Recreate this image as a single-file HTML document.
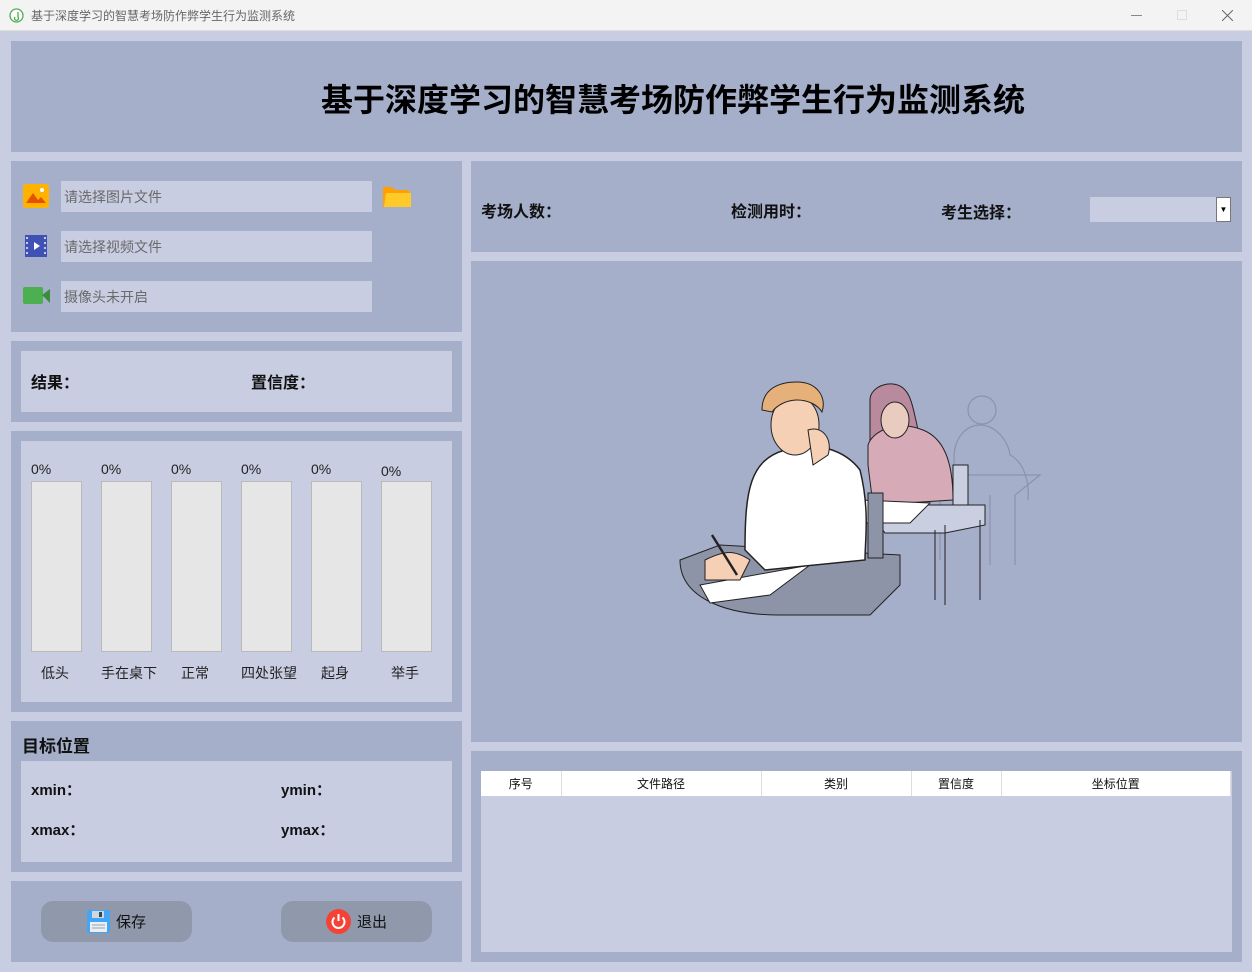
<!DOCTYPE html>
<html><head><meta charset="utf-8"><style>
*{margin:0;padding:0;box-sizing:border-box}
body{width:1252px;height:972px;background:#c8cde2;font-family:"Liberation Sans","Noto Sans CJK SC",sans-serif;position:relative;overflow:hidden}
.a{position:absolute}
.p{position:absolute;background:#a5afca}
.l{position:absolute;background:#c8cde2}
.b{font-weight:bold;font-size:16px;color:#111}
.bar{position:absolute;top:481px;width:51px;height:171px;background:#e6e6e6;border:1px solid #b9b9b9}
.pc{position:absolute;top:461px;font-size:14px;color:#222}
.bl{position:absolute;top:663px;font-size:14px;color:#222}
.inp{position:absolute;left:61px;width:311px;height:31px;background:#c8cde2;color:#6a6a6a;font-size:14px;padding:8px 3px;line-height:17px}
.btn{position:absolute;top:901px;width:151px;height:41px;border-radius:12px;background:#8f99ab;font-size:15px;color:#111;display:flex;align-items:center;justify-content:center;gap:6px}
th{font-weight:normal;font-size:12px;color:#111;height:25px;background:#fff;border-right:1px solid #ddd}
</style></head><body>
<div class="a" style="left:0;top:0;width:1252px;height:31px;background:#f3f3f3;border-bottom:1px solid #ddd"></div>
<svg class="a" style="left:9px;top:8px" width="15" height="15"><circle cx="7.5" cy="7.5" r="6.5" fill="#fff" stroke="#4caf50" stroke-width="1.3"/><path d="M6 9a2 2 0 1 0 3 0V4" stroke="#4caf50" fill="none" stroke-width="1.3"/></svg>
<div class="a" style="left:31px;top:7px;font-size:12px;color:#666">基于深度学习的智慧考场防作弊学生行为监测系统</div>
<div class="a" style="left:1131px;top:15px;width:11px;height:1px;background:#888"></div>
<div class="a" style="left:1177px;top:10px;width:10px;height:10px;border:1px solid #ddd"></div>
<svg class="a" style="left:1222px;top:10px" width="11" height="11"><path d="M0 0L11 11M11 0L0 11" stroke="#666" stroke-width="1"/></svg>

<div class="p" style="left:11px;top:41px;width:1231px;height:111px"></div>
<div class="a" style="left:321px;top:75px;font-size:32px;font-weight:bold;color:#000;white-space:nowrap">基于深度学习的智慧考场防作弊学生行为监测系统</div>

<div class="p" style="left:11px;top:161px;width:451px;height:171px"></div>
<svg class="a" style="left:23px;top:184px" width="26" height="24"><rect width="26" height="24" rx="3" fill="#ffb300"/><path d="M3 19l7-10 5 7 3-3 5 6z" fill="#e65100"/><circle cx="19" cy="6" r="2" fill="#fff"/></svg>
<div class="inp" style="top:181px">请选择图片文件</div>
<svg class="a" style="left:383px;top:185px" width="28" height="22"><path d="M0 2h9l3 3h14v17H0z" fill="#ffa000"/><path d="M3 8h25v14H1z" fill="#ffca28"/></svg>
<svg class="a" style="left:25px;top:235px" width="22" height="22"><rect width="22" height="22" fill="#3f51b5"/><g fill="#c5cae9"><rect x="1" y="2" width="2" height="2"/><rect x="1" y="7" width="2" height="2"/><rect x="1" y="12" width="2" height="2"/><rect x="1" y="17" width="2" height="2"/><rect x="19" y="2" width="2" height="2"/><rect x="19" y="7" width="2" height="2"/><rect x="19" y="12" width="2" height="2"/><rect x="19" y="17" width="2" height="2"/></g><path d="M9 7l6 4-6 4z" fill="#fff"/></svg>
<div class="inp" style="top:231px">请选择视频文件</div>
<svg class="a" style="left:23px;top:287px" width="27" height="17"><rect width="20" height="17" rx="2" fill="#4caf50"/><path d="M19 8l8-6v14z" fill="#388e3c"/></svg>
<div class="inp" style="top:281px">摄像头未开启</div>

<div class="p" style="left:11px;top:341px;width:451px;height:81px"></div>
<div class="l" style="left:21px;top:351px;width:431px;height:61px"></div>
<div class="a b" style="left:31px;top:369px">结果：</div>
<div class="a b" style="left:251px;top:369px">置信度：</div>

<div class="p" style="left:11px;top:431px;width:451px;height:281px"></div>
<div class="l" style="left:21px;top:441px;width:431px;height:261px"></div>
<div class="pc" style="left:31px">0%</div><div class="pc" style="left:101px">0%</div><div class="pc" style="left:171px">0%</div><div class="pc" style="left:241px">0%</div><div class="pc" style="left:311px">0%</div><div class="pc" style="left:381px;top:463px">0%</div>
<div class="bar" style="left:31px"></div><div class="bar" style="left:101px"></div><div class="bar" style="left:171px"></div><div class="bar" style="left:241px"></div><div class="bar" style="left:311px"></div><div class="bar" style="left:381px"></div>
<div class="bl" style="left:41px">低头</div><div class="bl" style="left:101px">手在桌下</div><div class="bl" style="left:181px">正常</div><div class="bl" style="left:241px">四处张望</div><div class="bl" style="left:321px">起身</div><div class="bl" style="left:391px">举手</div>

<div class="p" style="left:11px;top:721px;width:451px;height:151px"></div>
<div class="a b" style="left:22px;top:732px;font-size:17px">目标位置</div>
<div class="l" style="left:21px;top:761px;width:431px;height:101px"></div>
<div class="a b" style="left:31px;top:779px;font-size:15px">xmin：</div>
<div class="a b" style="left:281px;top:779px;font-size:15px">ymin：</div>
<div class="a b" style="left:31px;top:819px;font-size:15px">xmax：</div>
<div class="a b" style="left:281px;top:819px;font-size:15px">ymax：</div>

<div class="p" style="left:11px;top:881px;width:451px;height:81px"></div>
<div class="btn" style="left:41px"><svg width="23" height="23"><rect width="23" height="23" rx="2" fill="#42a5f5"/><rect x="5" y="1" width="12" height="7" fill="#cfd8dc"/><rect x="12" y="2" width="3" height="5" fill="#37474f"/><rect x="3" y="12" width="17" height="10" fill="#eceff1"/><path d="M5 15h13M5 18h13" stroke="#90a4ae"/></svg>保存</div>
<div class="btn" style="left:281px"><svg width="25" height="25"><circle cx="12.5" cy="12.5" r="12.5" fill="#f44336"/><path d="M8.5 8.5a6 6 0 1 0 8 0" stroke="#fff" stroke-width="2" fill="none"/><path d="M12.5 5v7" stroke="#fff" stroke-width="2"/></svg>退出</div>

<div class="p" style="left:471px;top:161px;width:771px;height:91px"></div>
<div class="a b" style="left:481px;top:198px">考场人数：</div>
<div class="a b" style="left:731px;top:198px">检测用时：</div>
<div class="a b" style="left:941px;top:199px">考生选择：</div>
<div class="l" style="left:1090px;top:197px;width:141px;height:25px"></div>
<div class="a" style="left:1216px;top:197px;width:15px;height:25px;background:#fff;border:1px solid #777;font-size:8px;text-align:center;line-height:23px">▼</div>

<div class="p" style="left:471px;top:261px;width:771px;height:481px"></div>
<svg class="a" style="left:670px;top:380px" width="380" height="240" viewBox="670 380 380 240">
<g stroke="#8a93aa" fill="none" stroke-width="1.2"><path d="M955 470c-5-30 10-45 25-45s28 15 30 30c10 5 20 20 18 45"/><circle cx="982" cy="410" r="14"/><path d="M965 475h75l-25 20v70M990 495v70M940 500v60"/></g>
<path d="M865 505h120v20l-40 8h-60z" fill="#c9cfe0" stroke="#222"/><path d="M945 525v80M980 520v80M935 530v70" stroke="#222"/>
<rect x="953" y="465" width="15" height="40" fill="#c9cfe0" stroke="#222"/>
<path d="M870 400c0-15 25-22 35-10 10 10 10 40 20 60l-55 5z" fill="#b98a9e" stroke="#222"/>
<path d="M868 445c5-15 30-25 55-15 20 8 30 30 30 70l-80 5-5-40z" fill="#d7aab8" stroke="#222"/>
<ellipse cx="895" cy="420" rx="14" ry="18" fill="#e9cbbf" stroke="#222"/>
<path d="M860 500l70 3-20 20h-60z" fill="#fff" stroke="#222"/>
<path d="M680 560l40-15 180 10v30l-30 30H780c-60 0-100-20-100-55z" fill="#8d94a8" stroke="#222"/>
<path d="M700 585l110-20-40 30-60 8z" fill="#fff" stroke="#222"/>
<rect x="868" y="493" width="15" height="65" fill="#8d94a8" stroke="#222"/>
<path d="M745 550c0-60 5-90 40-100 30-10 60 0 75 20 10 40 5 70 5 90l-100 10z" fill="#fff" stroke="#222" stroke-width="1.5"/>
<path d="M705 560c20-10 30-10 45 0l-10 20h-35z" fill="#f5d0b5" stroke="#222"/>
<path d="M712 535l25 40" stroke="#222" stroke-width="2.5"/>
<ellipse cx="795" cy="425" rx="24" ry="30" fill="#f5d0b5" stroke="#222"/>
<path d="M762 410c0-20 15-28 35-28s30 15 25 30c-5-8-15-12-25-12-10 0-20 5-25 12z" fill="#e6b07a" stroke="#222"/>
<path d="M808 430c15-5 25 10 20 25l-15 10z" fill="#f5d0b5" stroke="#222"/>
</svg>

<div class="p" style="left:471px;top:751px;width:771px;height:211px"></div>
<div class="l" style="left:481px;top:771px;width:751px;height:181px"></div>
<table class="a" style="left:481px;top:771px;width:750px;border-collapse:collapse"><tr><th style="width:80px">序号</th><th style="width:200px">文件路径</th><th style="width:150px">类别</th><th style="width:90px">置信度</th><th>坐标位置</th></tr></table>
</body></html>
